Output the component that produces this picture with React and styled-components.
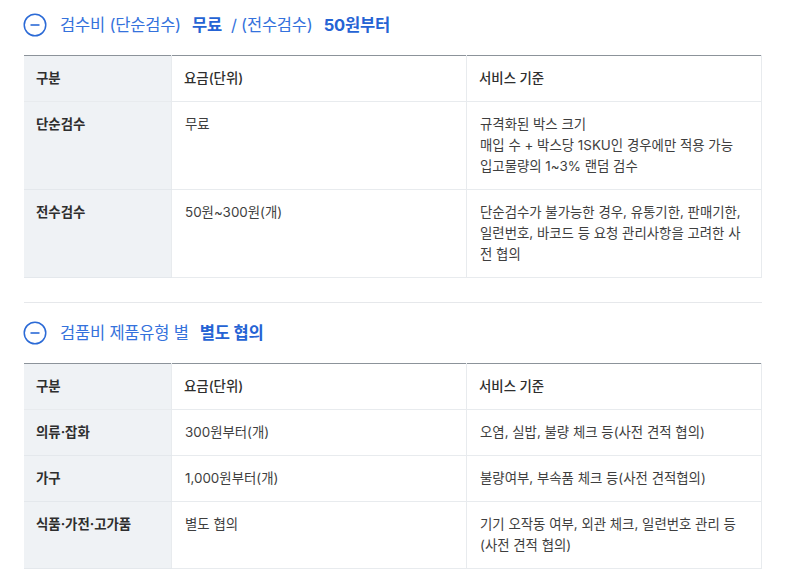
import React from "react";
import styled, { createGlobalStyle } from "styled-components";

const GlobalStyle = createGlobalStyle`
  body {
    margin: 0;
    background: #ffffff;
    font-family: Inter, "Noto Sans CJK KR", sans-serif;
  }
`;

const sections = [
  {
    title: [
      { text: "검수비 (단순검수)", strong: false },
      { text: "무료", strong: true },
      { text: "/ (전수검수)", strong: false },
      { text: "50원부터", strong: true },
    ],
    rows: [
      { name: "단순검수", price: "무료", desc: ["규격화된 박스 크기", "매입 수 + 박스당 1SKU인 경우에만 적용 가능", "입고물량의 1~3% 랜덤 검수"] },
      { name: "전수검수", price: "50원~300원(개)", desc: ["단순검수가 불가능한 경우, 유통기한, 판매기한, 일련번호, 바코드 등 요청 관리사항을 고려한 사전 협의"] },
    ],
  },
  {
    title: [
      { text: "검품비 제품유형 별", strong: false },
      { text: "별도 협의", strong: true },
    ],
    rows: [
      { name: "의류·잡화", price: "300원부터(개)", desc: ["오염, 실밥, 불량 체크 등(사전 견적 협의)"] },
      { name: "가구", price: "1,000원부터(개)", desc: ["불량여부, 부속품 체크 등(사전 견적협의)"] },
      { name: "식품·가전·고가품", price: "별도 협의", desc: ["기기 오작동 여부, 외관 체크, 일련번호 관리 등", "(사전 견적 협의)"] },
    ],
  },
];

function MinusCircle() {
  return (
    <svg width="24" height="24" viewBox="0 0 24 24" fill="none">
      <circle cx="12" cy="12" r="10.75" stroke="#2b6ad6" strokeWidth="1.5" />
      <line x1="7.5" y1="12" x2="16.5" y2="12" stroke="#2b6ad6" strokeWidth="1.6" />
    </svg>
  );
}

function App() {
  return (
    <>
      <GlobalStyle />
      <Page>
        {sections.map((section, i) => (
          <Section key={i} first={i === 0}>
            <Heading>
              <MinusCircle />
              <Title>
                {section.title.map((part, j) => (
                  <Part key={j} strong={part.strong}>{part.text}</Part>
                ))}
              </Title>
            </Heading>
            <Table>
              <colgroup>
                <col style={{ width: "20%" }} />
                <col style={{ width: "40%" }} />
                <col style={{ width: "40%" }} />
              </colgroup>
              <thead>
                <tr>
                  <HeadCell side>구분</HeadCell>
                  <HeadCell>요금(단위)</HeadCell>
                  <HeadCell>서비스 기준</HeadCell>
                </tr>
              </thead>
              <tbody>
                {section.rows.map((row, k) => (
                  <tr key={k}>
                    <NameCell>{row.name}</NameCell>
                    <Cell>{row.price}</Cell>
                    <Cell>
                      {row.desc.map((line, n) => (
                        <div key={n}>{line}</div>
                      ))}
                    </Cell>
                  </tr>
                ))}
              </tbody>
            </Table>
          </Section>
        ))}
      </Page>
    </>
  );
}

const Page = styled.div`
  width: 738px;
  padding: 0 23px 0 24px;
`;

const Section = styled.section`
  padding: ${(p) => (p.first ? "13px 0 24px" : "18px 0 12px")};
  border-top: ${(p) => (p.first ? "none" : "1px solid #e6e8eb")};
`;

const Heading = styled.div`
  display: flex;
  align-items: center;
  gap: 13px;
  height: 24px;
  margin-bottom: 18px;
  margin-left: -1px;
`;

const Title = styled.h3`
  margin: 0;
  display: flex;
  gap: 9px;
  font-size: 16.5px;
  line-height: 24px;
  color: #3572dc;
  font-weight: 400;
  letter-spacing: -0.2px;
`;

const Part = styled.span`
  font-weight: ${(p) => (p.strong ? 700 : 400)};
  color: ${(p) => (p.strong ? "#2563d4" : "#3572dc")};
  margin-left: ${(p) => (p.strong ? "2px" : "0")};
`;

const Table = styled.table`
  width: 100%;
  border-collapse: collapse;
  table-layout: fixed;
  border-top: 1px solid #8c939a;
  border-right: 1px solid #e8ebee;
  font-size: 13.4px;
  line-height: 21px;
  color: #3a3a3a;
`;

const HeadCell = styled.th`
  text-align: left;
  font-weight: ${(p) => (p.side ? 700 : 500)};
  color: #2e2e2e;
  padding: 12px 13px 12px 12px;
  background: ${(p) => (p.side ? "#eff2f5" : "#ffffff")};
  border-bottom: 1px solid #e8ebee;
  border-left: ${(p) => (p.side ? "none" : "1px solid #e8ebee")};
`;

const NameCell = styled.td`
  vertical-align: top;
  font-weight: 700;
  color: #2e2e2e;
  padding: 12px 12px;
  background: #eff2f5;
  border-bottom: 1px solid #e4e8ec;
`;

const Cell = styled.td`
  vertical-align: top;
  padding: 12px 13px 12px 13px;
  border-left: 1px solid #e8ebee;
  border-bottom: 1px solid #e8ebee;
  color: #3e3e3e;
`;

export default App;
